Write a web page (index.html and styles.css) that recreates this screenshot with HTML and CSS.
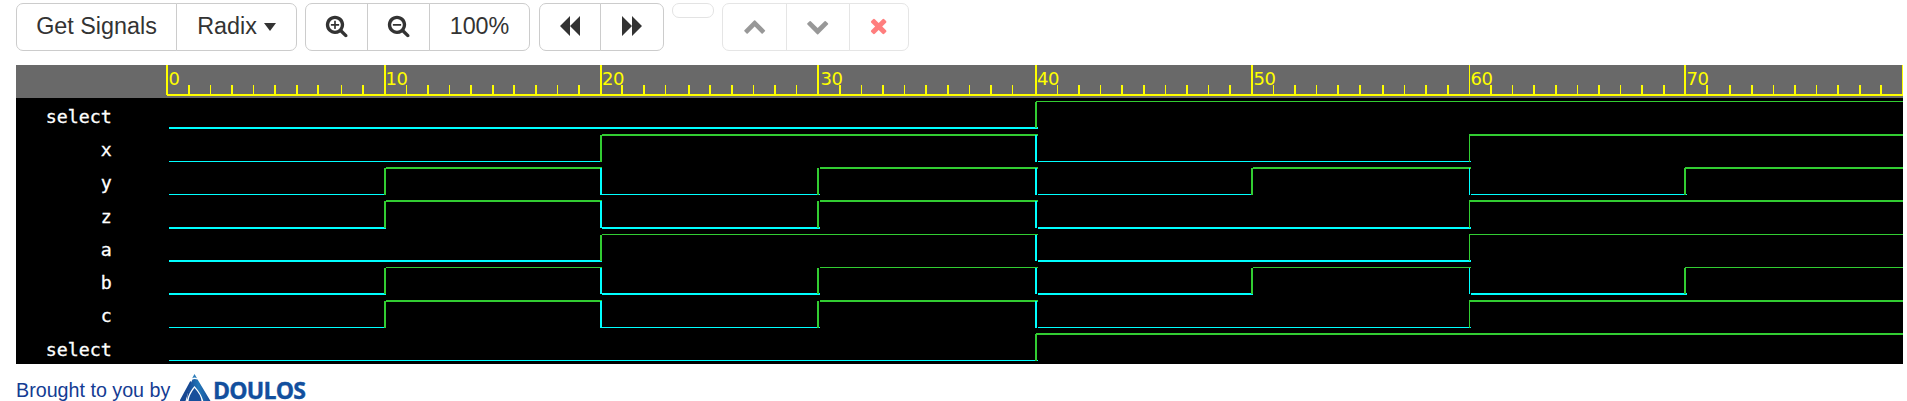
FILE: index.html
```html
<!DOCTYPE html>
<html lang="en">
<head>
<meta charset="utf-8">
<title>Waveform viewer</title>
<link rel="stylesheet" href="styles.css">
</head>
<body>
<div class="toolbar">
  <div class="group">
    <button class="btn signals">Get Signals</button>
    <button class="btn radix">Radix<span class="caret"></span></button>
  </div>
  <div class="group zoom">
    <button class="btn zoom-in" aria-label="Zoom in"><svg class="icon" viewBox="0 0 1792 1792"><path d="M1088 800v64q0 13-9.5 22.5t-22.5 9.5h-224v224q0 13-9.5 22.5t-22.5 9.5h-64q-13 0-22.5-9.5t-9.5-22.5v-224h-224q-13 0-22.5-9.5t-9.5-22.5v-64q0-13 9.5-22.5t22.5-9.5h224v-224q0-13 9.5-22.5t22.5-9.5h64q13 0 22.5 9.5t9.5 22.5v224h224q13 0 22.5 9.5t9.5 22.5zm128 32q0-185-131.5-316.5t-316.5-131.5-316.5 131.5-131.5 316.5 131.5 316.5 316.5 131.5 316.5-131.5 131.5-316.5zm512 832q0 53-37.5 90.5t-90.5 37.5q-54 0-90-38l-343-342q-179 124-399 124-143 0-273.5-55.5t-225-150-150-225-55.5-273.5 55.5-273.5 150-225 225-150 273.5-55.5 273.5 55.5 225 150 150 225 55.5 273.5q0 220-124 399l343 343q37 37 37 90z"/></svg></button>
    <button class="btn zoom-out" aria-label="Zoom out"><svg class="icon" viewBox="0 0 1792 1792"><path d="M1088 800v64q0 13-9.5 22.5t-22.5 9.5h-576q-13 0-22.5-9.5t-9.5-22.5v-64q0-13 9.5-22.5t22.5-9.5h576q13 0 22.5 9.5t9.5 22.5zm128 32q0-185-131.5-316.5t-316.5-131.5-316.5 131.5-131.5 316.5 131.5 316.5 316.5 131.5 316.5-131.5 131.5-316.5zm512 832q0 53-37.5 90.5t-90.5 37.5q-54 0-90-38l-343-342q-179 124-399 124-143 0-273.5-55.5t-225-150-150-225-55.5-273.5 55.5-273.5 150-225 225-150 273.5-55.5 273.5 55.5 225 150 150 225 55.5 273.5q0 220-124 399l343 343q37 37 37 90z"/></svg></button>
    <button class="btn full">100%</button>
  </div>
  <div class="group pan">
    <button class="btn back" aria-label="Back"><svg class="seek" viewBox="0 0 20 20"><path d="M0 10L10 0V10L20 0V20L10 10V20Z"/></svg></button>
    <button class="btn forward" aria-label="Forward"><svg class="seek" viewBox="0 0 20 20"><path d="M20 10L10 0V10L0 0V20L10 10V20Z"/></svg></button>
  </div>
  <span class="pill"></span>
  <div class="group edit">
    <button class="btn up" aria-label="Move up"><svg class="icon" viewBox="0 0 1792 1792"><path d="M1683 1331l-166 165q-19 19-45 19t-45-19l-531-531-531 531q-19 19-45 19t-45-19l-166-165q-19-19-19-45.5t19-45.5l742-741q19-19 45-19t45 19l742 741q19 19 19 45.5t-19 45.5z"/></svg></button>
    <button class="btn down" aria-label="Move down"><svg class="icon" viewBox="0 0 1792 1792"><path d="M1683 808l-742 741q-19 19-45 19t-45-19l-742-741q-19-19-19-45.5t19-45.5l166-165q19-19 45-19t45 19l531 531 531-531q19-19 45-19t45 19l166 165q19 19 19 45.5t-19 45.5z"/></svg></button>
    <button class="btn remove" aria-label="Remove"><svg class="icon" viewBox="0 0 1792 1792"><path d="M1490 1322q0 40-28 68l-136 136q-28 28-68 28t-68-28l-294-294-294 294q-28 28-68 28t-68-28l-136-136q-28-28-28-68t28-68l294-294-294-294q-28-28-28-68t28-68l136-136q28-28 68-28t68 28l294 294 294-294q28-28 68-28t68 28l136 136q28 28 28 68t-28 68l-294 294 294 294q28 28 28 68z"/></svg></button>
  </div>
</div>
<svg class="wave" viewBox="16 65 1887 299" shape-rendering="crispEdges">
  <rect x="16" y="65" width="1887" height="299" fill="#000"/>
  <rect x="16" y="65" width="1887" height="33" fill="#696969"/>
</svg>
<div class="footer">
  <span class="credit">Brought to you by</span>
  <svg class="mark" viewBox="0 0 31 27">
    <defs><linearGradient id="blue" x1="0" y1="0" x2="1" y2="0"><stop offset="0" stop-color="#15428f"/><stop offset=".5" stop-color="#2277b8"/><stop offset="1" stop-color="#174b98"/></linearGradient></defs>
    <path d="M14.500 0L17 4.200Q14.500 3 12.200 4.200Z" fill="#2b7cba"/>
    <path d="M10.300 7Q12 8 10.600 12.500Q7.500 19 5.500 27H-.5Z" fill="#174892"/>
    <path d="M12.500 5.500Q14.500 4.500 17.600 5.500L30.500 27H23.300Q21.500 20 14.500 12Q9 18 6.700 27Q8 13 12.500 5.500Z" fill="url(#blue)"/>
    <path d="M14.500 14Q21 21 21.500 27H8.500Q9 21 14.500 14Z" fill="#174f9b"/>
  </svg>
  <span class="brand">DOULOS</span>
</div>
<script src="wave.js"></script>
</body>
</html>
```

FILE: styles.css
```css
html, body { height: 401px; overflow: hidden; }
body { margin: 0; background: #fff; font-family: "Liberation Sans", Arial, sans-serif; color: #333; }
.toolbar { display: flex; align-items: flex-start; height: 62px; padding: 3px 0 0 16px; box-sizing: content-box; }
.group { display: flex; }
.zoom { margin-left: 8px; }
.pan { margin-left: 9px; }
.edit { margin-left: 8px; opacity: .5; }
.btn {
  box-sizing: border-box;
  display: flex;
  align-items: center;
  justify-content: center;
  height: 48px;
  margin: 0;
  padding: 0 0 2px;
  border: 1px solid #ccc;
  background: #fff;
  color: #333;
  font: 23.33px/33px "Liberation Sans", Arial, sans-serif;
}
.btn + .btn { margin-left: -1px; }
.btn:first-child { border-radius: 7px 0 0 7px; }
.btn:last-child { border-radius: 0 7px 7px 0; }
.signals { width: 161px; }
.radix { width: 121px; }
.zoom-in { width: 63px; }
.zoom-out { width: 63px; }
.full { width: 101px; }
.back { width: 62px; }
.forward { width: 64px; }
.up { width: 65px; }
.down { width: 64px; }
.remove { width: 60px; color: red; }
.caret {
  margin-left: 7px;
  margin-top: 2px;
  border: 6.5px solid transparent;
  border-top: 8px solid #333;
  border-bottom: 0;
}
.icon { width: 23.33px; height: 23.33px; fill: currentColor; }
.seek { width: 20px; height: 20px; fill: currentColor; }
.pill { box-sizing: border-box; width: 42px; height: 15px; margin-left: 8px; border: 1px solid #e3e3e3; border-radius: 7px; }
.wave { display: block; width: 1887px; height: 299px; margin-left: 16px; }
.time { font-family: "DejaVu Sans", sans-serif; font-size: 18px; letter-spacing: -.45px; fill: #ff0; }
.name { font-family: "DejaVu Sans Mono", monospace; font-size: 18.3px; fill: #fff; stroke: #fff; stroke-width: .3px; text-anchor: end; }
.footer { display: flex; align-items: flex-start; height: 37px; padding-left: 16px; }
.credit { width: 164px; margin-top: 15px; font-size: 19.7px; line-height: 22px; color: #143c93; white-space: nowrap; }
.mark { width: 31px; height: 27px; margin-top: 10px; flex: none; }
.brand { margin: 15px 0 0 2px; font: bold 23px/22px "Open Sans", "Noto Sans", sans-serif; letter-spacing: -.75px; color: #124f9e; -webkit-text-stroke: .4px #124f9e; }
```

FILE: wave.js
```js
const svg = document.querySelector('.wave');
const YELLOW = '#ff0', HIGH = '#32cd32', LOW = '#0ff';

function rect(x, y, width, height, fill) {
  const el = document.createElementNS('http://www.w3.org/2000/svg', 'rect');
  Object.entries({ x, y, width, height, fill }).forEach(([k, v]) => el.setAttribute(k, v));
  svg.appendChild(el);
}

function label(x, y, cls, str) {
  const el = document.createElementNS('http://www.w3.org/2000/svg', 'text');
  el.setAttribute('x', x);
  el.setAttribute('y', y);
  el.setAttribute('class', cls);
  el.textContent = str;
  svg.appendChild(el);
}

// Ruler: [x, width] of the line at every tenth time unit
const major = [[166, 2], [384, 2], [600, 2], [817, 2], [1035, 2], [1251, 2], [1469, 1], [1684, 2], [1902, 1]];
const textX = [168.5, 385.5, 602, 820.5, 1037, 1253.5, 1470.5, 1686.5];
const minorWide = [188, 231, 274, 296, 317, 362, 427, 470, 492, 513, 535, 578, 621, 643, 688, 709, 731, 774,
  839, 882, 925, 947, 990, 1078, 1121, 1143, 1186, 1229, 1294, 1337, 1359, 1382, 1425, 1447,
  1490, 1533, 1555, 1598, 1641, 1663, 1706, 1729, 1751, 1794, 1837, 1859, 1880];
const minorThin = [210, 253, 341, 406, 449, 557, 665, 753, 796, 861, 904, 969, 1012,
  1057, 1100, 1165, 1208, 1273, 1316, 1404, 1512, 1577, 1620, 1773, 1816];
rect(167, 94, 1736, 2, YELLOW);
minorWide.forEach(x => rect(x, 85, 2, 10, YELLOW));
minorThin.forEach(x => rect(x, 85, 1, 10, YELLOW));
major.forEach(([x, w]) => rect(x, 65, w, 30, YELLOW));
textX.forEach((x, i) => label(x, 85, 'time', String(i * 10)));

// Signals: line position and thickness of each level, and the value in each interval
const signals = [
  ['select', 101, 1, 127, 2, '00001111', 123],
  ['x', 134, 2, 161, 1, '00110011', 156],
  ['y', 167, 2, 194, 1, '01010101', 189],
  ['z', 200, 2, 227, 2, '01010011', 223],
  ['a', 234, 1, 260, 2, '00110011', 256],
  ['b', 267, 1, 293, 2, '01010101', 289],
  ['c', 300, 2, 327, 1, '01010011', 322],
  ['select', 333, 2, 360, 1, '00001111', 356],
];
const lineStart = [169, 386, 602, 820, 1038, 1253, 1471, 1687, 1903];

for (const [name, hy, hw, ly, lw, values, base] of signals) {
  label(111.7, base, 'name', name);
  for (let i = 0; i < 8; i++) {
    const on = values[i] === '1';
    let from = lineStart[i];
    if (on && i >= 4) from = major[i][0] + (i === 5 ? 2 : i === 6 ? 0 : 1);
    rect(from, on ? hy : ly, lineStart[i + 1] - from, on ? hw : lw, on ? HIGH : LOW);
  }
  for (let i = 1; i < 8; i++) {
    if (values[i] === values[i - 1]) continue;
    const [x, w] = major[i];
    rect(x, hy + 1, w, ly - hy, values[i] === '1' ? HIGH : LOW);
  }
}
```
